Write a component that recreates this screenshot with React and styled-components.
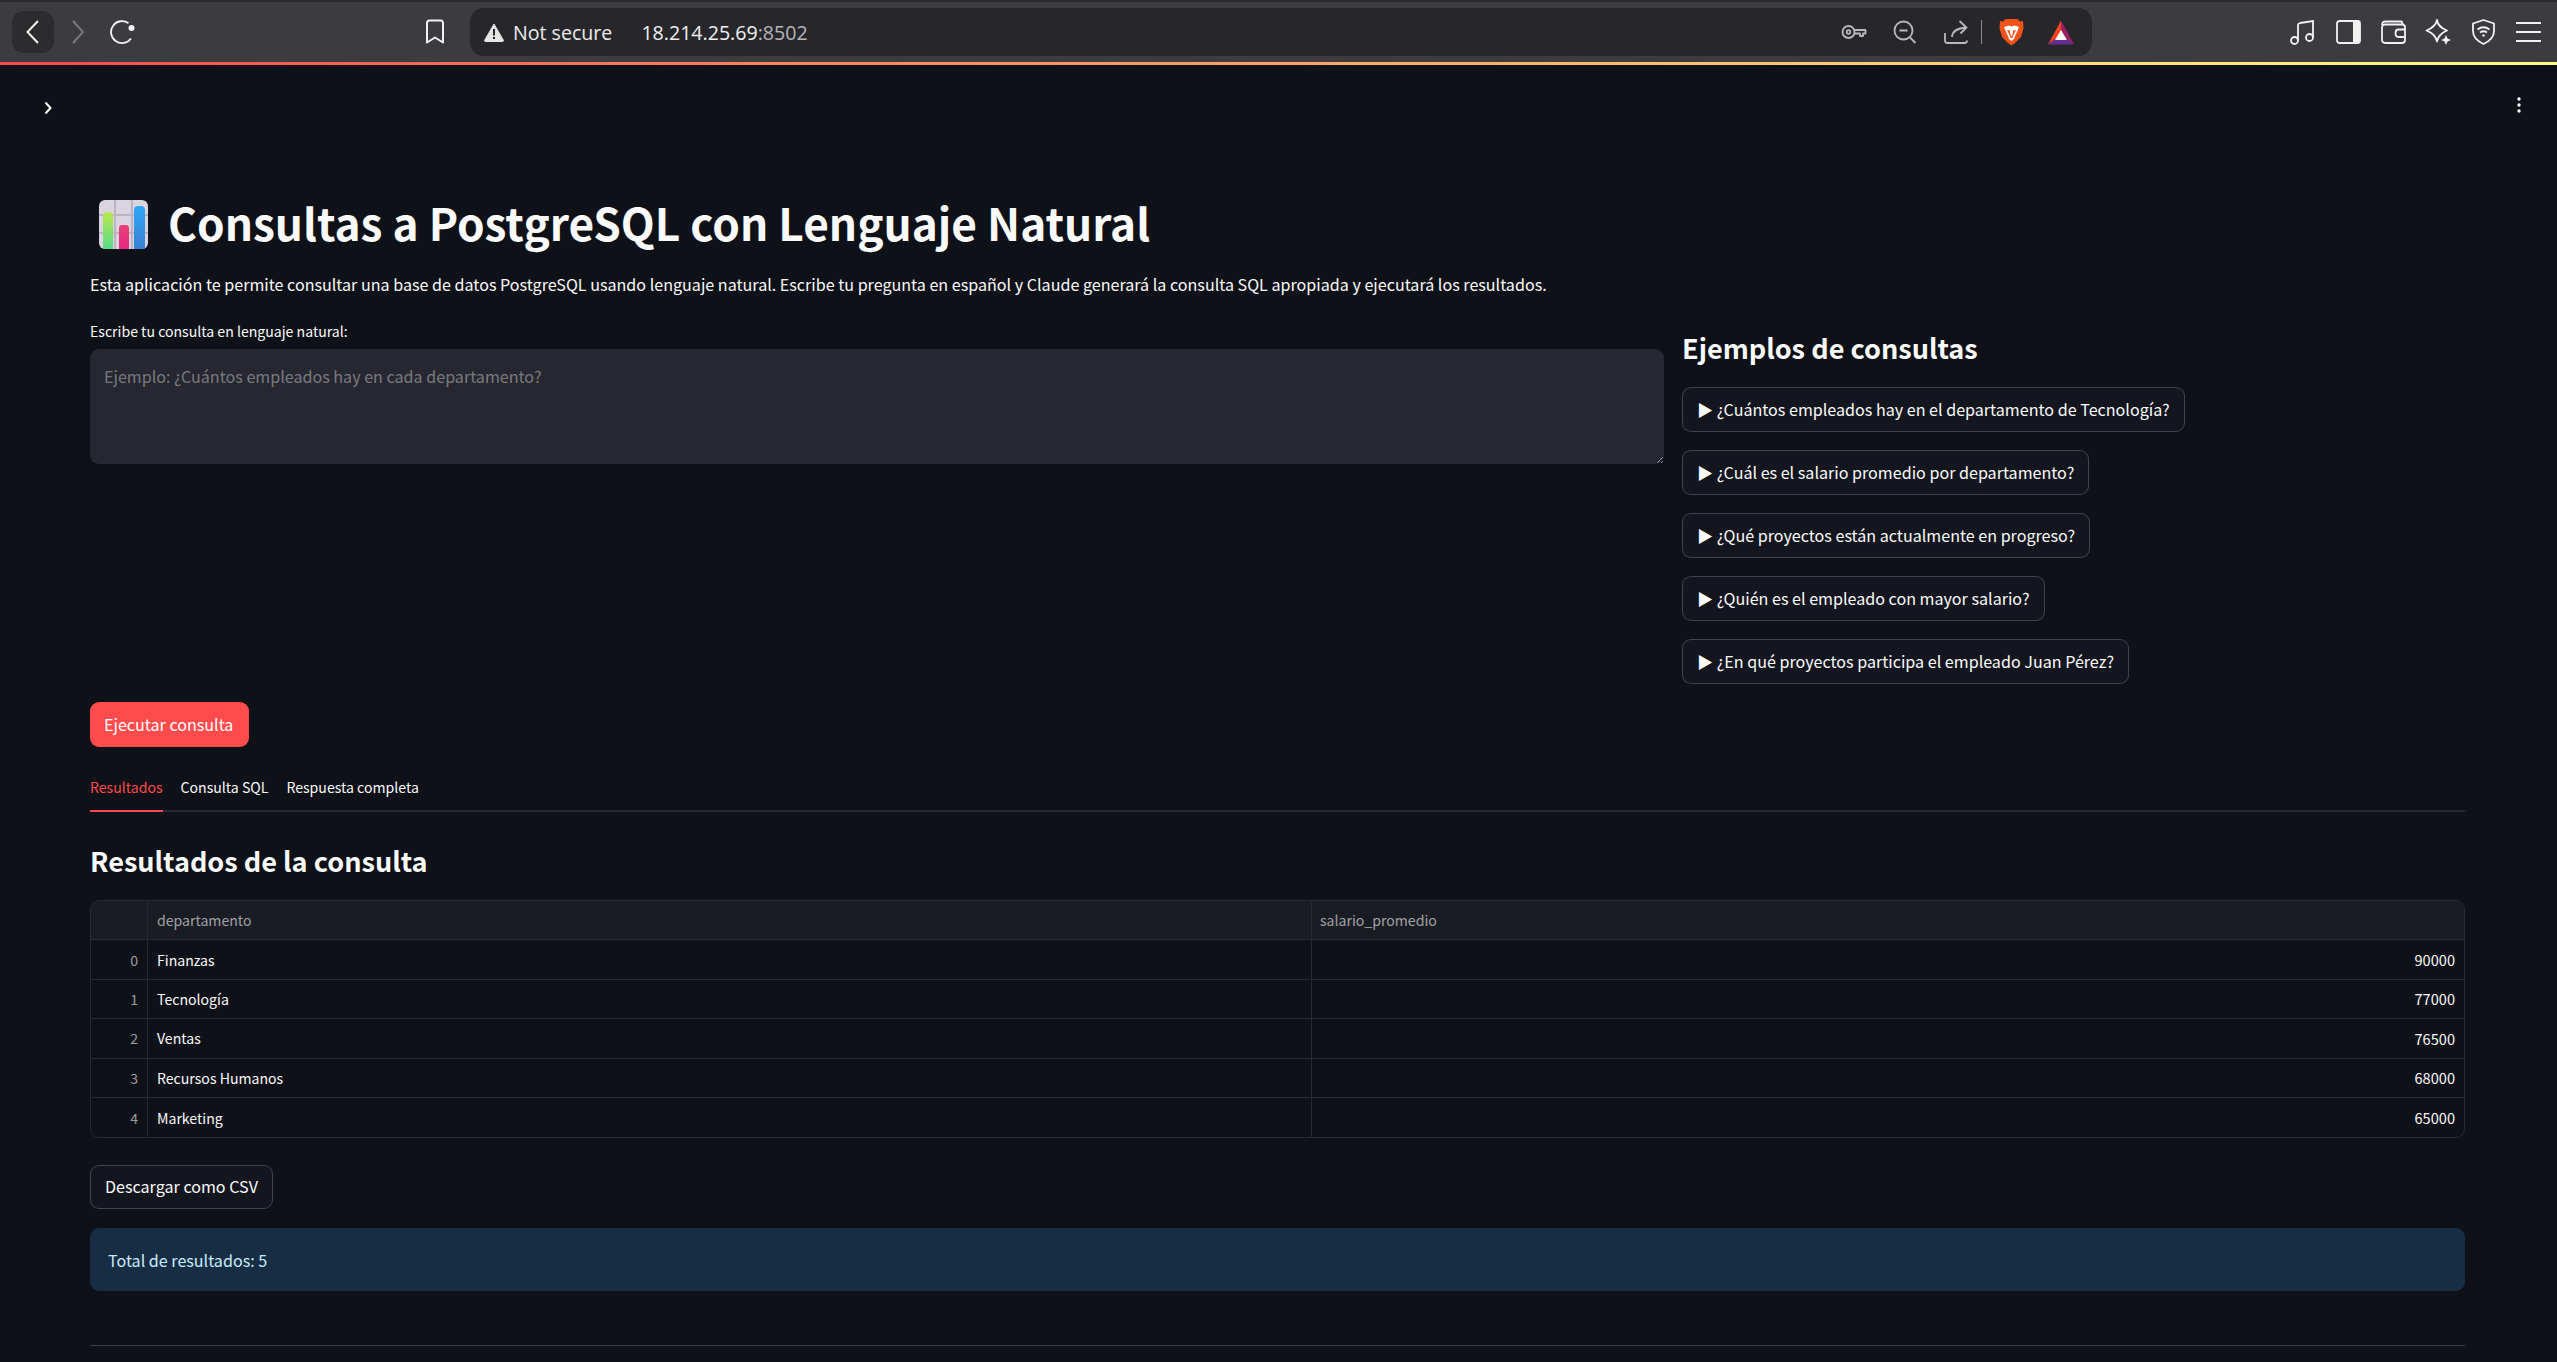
import React from 'react'
import styled, { createGlobalStyle } from 'styled-components'

const SANS = '"Noto Sans CJK SC", "Liberation Sans", sans-serif'

const rows = [
  { idx: 0, dep: 'Finanzas', sal: 90000 },
  { idx: 1, dep: 'Tecnología', sal: 77000 },
  { idx: 2, dep: 'Ventas', sal: 76500 },
  { idx: 3, dep: 'Recursos Humanos', sal: 68000 },
  { idx: 4, dep: 'Marketing', sal: 65000 },
]

const examples = [
  '¿Cuántos empleados hay en el departamento de Tecnología?',
  '¿Cuál es el salario promedio por departamento?',
  '¿Qué proyectos están actualmente en progreso?',
  '¿Quién es el empleado con mayor salario?',
  '¿En qué proyectos participa el empleado Juan Pérez?',
]

const App = () => {
  return (
    <>
      <GlobalStyle />
      <Toolbar>
        <BackButton>
          <svg width="18" height="26" viewBox="0 0 18 26" fill="none" stroke="#f2f2f2" strokeWidth="2">
            <path d="M14 2 L3.5 13 L14 24" />
          </svg>
        </BackButton>
        <IconBox $w={24} $ml={12}>
          <svg width="16" height="26" viewBox="0 0 16 26" fill="none" stroke="#77777b" strokeWidth="2">
            <path d="M3 2 L13 13 L3 24" />
          </svg>
        </IconBox>
        <IconBox $w={26} $ml={20}>
          <svg width="26" height="26" viewBox="0 0 26 26" fill="none" stroke="#f2f2f2" strokeWidth="1.8">
            <path d="M21 19.5 A11 11 0 1 1 18.5 4.2" />
            <circle cx="21.5" cy="9" r="3" fill="#f2f2f2" stroke="none" />
          </svg>
        </IconBox>
        <IconBox $w={24} $ml={287}>
          <svg width="20" height="26" viewBox="0 0 20 26" fill="none" stroke="#f2f2f2" strokeWidth="2">
            <path d="M2 4 Q2 1.5 4.5 1.5 H15.5 Q18 1.5 18 4 V23.5 L10 18.5 L2 23.5 Z" strokeLinejoin="round" />
          </svg>
        </IconBox>
        <AddressBar>
          <svg width="20" height="19" viewBox="0 0 20 19">
            <path d="M10 1 L19.5 17.5 Q19.5 18.5 18.5 18.5 H1.5 Q0.5 18.5 0.5 17.5 Z" fill="#e6e6e6" stroke="#e6e6e6" strokeLinejoin="round" />
            <rect x="9" y="6" width="2" height="6.5" fill="#27272b" />
            <rect x="9" y="14" width="2" height="2" fill="#27272b" />
          </svg>
          <NotSecure>Not secure</NotSecure>
          <Url>18.214.25.69<UrlPort>:8502</UrlPort></Url>
          <AddressIcons>
            <IconBox $w={28}>
              <svg width="26" height="16" viewBox="0 0 26 16" fill="none" stroke="#b9b9bb" strokeWidth="1.8">
                <circle cx="7.5" cy="8" r="6" />
                <circle cx="7.5" cy="8" r="1.8" />
                <path d="M13.5 6 H24.5 V9.5 L22 9.5 V12 H19 V9.5 H13.5" strokeLinejoin="round" />
              </svg>
            </IconBox>
            <IconBox $w={28} $ml={23}>
              <svg width="24" height="24" viewBox="0 0 24 24" fill="none" stroke="#b9b9bb" strokeWidth="1.8">
                <circle cx="10.5" cy="10.5" r="9" />
                <path d="M6.5 10.5 H14.5 M17 17.5 L22.5 23" />
              </svg>
            </IconBox>
            <IconBox $w={28} $ml={23}>
              <svg width="24" height="24" viewBox="0 0 24 24" fill="none" stroke="#b9b9bb" strokeWidth="1.8">
                <path d="M1 13 V20.5 Q1 23 3.5 23 H20.5 Q23 23 23 20.5" />
                <path d="M8 17 Q8.5 8.5 22 7.5 M15.5 1 L22.5 7.5 L16.5 13.5" />
              </svg>
            </IconBox>
            <Separator />
            <IconBox $w={28} $ml={15}>
              <svg width="25" height="28" viewBox="0 0 25 28">
                <path d="M6.5 1 H18.5 L21 3.5 L24 3 L24.5 10 L22 19 L16 25 L12.5 27.5 L9 25 L3 19 L0.5 10 L1 3 L4 3.5 Z" fill="#f2521b" />
                <path d="M5 9 L9.5 7.5 L12.5 8.5 L15.5 7.5 L20 9 L18 14 L16 18 L15 21 L12.5 23 L10 21 L9 18 L7 14 Z" fill="#fff" />
                <path d="M8 12 L11 12.5 L11 15 L12.5 19 L14 15 L14 12.5 L17 12 L14.5 17 L13.5 20 H11.5 L10.5 17 Z" fill="#f2521b" />
              </svg>
            </IconBox>
            <IconBox $w={28} $ml={22}>
              <svg width="28" height="25" viewBox="0 0 28 25">
                <path d="M14 0.5 L1 24.5 L14 15 Z" fill="#f4441f" />
                <path d="M14 0.5 L27 24.5 L14 15 Z" fill="#9e1f63" />
                <path d="M1 24.5 H27 L21 19.5 H7 Z" fill="#662d91" />
                <path d="M14 10 L20 20 H8 Z" fill="#fff" />
              </svg>
            </IconBox>
          </AddressIcons>
        </AddressBar>
        <BrowserIcons>
          <IconBox $w={28}>
            <svg width="26" height="25" viewBox="0 0 26 25" fill="none" stroke="#f2f2f2" strokeWidth="1.8">
              <circle cx="4.5" cy="20.5" r="3.5" />
              <circle cx="19.5" cy="17.5" r="3.5" />
              <path d="M8 20.5 V5 Q8 3.5 10 3 L23 1 V17.5" />
            </svg>
          </IconBox>
          <IconBox $w={28}>
            <svg width="25" height="24" viewBox="0 0 25 24" fill="none">
              <rect x="1" y="1" width="23" height="22" rx="2.5" stroke="#f2f2f2" strokeWidth="1.8" />
              <rect x="17" y="1" width="7" height="22" fill="#f2f2f2" />
            </svg>
          </IconBox>
          <IconBox $w={28}>
            <svg width="25" height="24" viewBox="0 0 25 24" fill="none" stroke="#f2f2f2" strokeWidth="1.8">
              <path d="M1 5 Q1 1.5 4.5 1.5 H20 Q21.5 1.5 21.5 4.5" />
              <rect x="1" y="4.5" width="23" height="18.5" rx="3" />
              <path d="M24 9.5 H17.5 Q14.5 9.5 14.5 13 Q14.5 17 17.5 17 H24" />
            </svg>
          </IconBox>
          <IconBox $w={28}>
            <svg width="26" height="26" viewBox="0 0 26 26" fill="none" stroke="#f2f2f2" strokeWidth="1.8">
              <path d="M12 1 Q13 8 22 11.5 Q13.5 15 12 22.5 Q10.5 15 1.5 11.5 Q10.5 8 12 1 Z" strokeLinejoin="round" />
              <path d="M21 16 L22.5 19.5 L26 21 L22.5 22.5 L21 26 L19.5 22.5 L16 21 L19.5 19.5 Z" fill="#f2f2f2" stroke="none" />
            </svg>
          </IconBox>
          <IconBox $w={28}>
            <svg width="23" height="26" viewBox="0 0 23 26" fill="none" stroke="#f2f2f2" strokeWidth="1.8">
              <path d="M11.5 1 L22 4.5 V12 Q22 20 11.5 25 Q1 20 1 12 V4.5 Z" strokeLinejoin="round" />
              <path d="M5.5 10.5 Q11.5 6 17.5 10.5 M8 13.5 Q11.5 11 15 13.5" />
              <circle cx="11.5" cy="16.5" r="1.2" fill="#f2f2f2" stroke="none" />
            </svg>
          </IconBox>
          <IconBox $w={28}>
            <svg width="25" height="22" viewBox="0 0 25 22" fill="none" stroke="#f2f2f2" strokeWidth="2">
              <path d="M0 2 H25 M0 11 H25 M0 20 H25" />
            </svg>
          </IconBox>
        </BrowserIcons>
      </Toolbar>
      <Decoration />
      <AppHeader>
        <svg width="10" height="14" viewBox="0 0 10 14" fill="none" stroke="#fafafa" strokeWidth="2">
          <path d="M2.5 1.5 L7.5 7 L2.5 12.5" />
        </svg>
        <KebabIcon width="4" height="16" viewBox="0 0 4 16" fill="#fafafa">
          <circle cx="2" cy="2" r="1.7" />
          <circle cx="2" cy="8" r="1.7" />
          <circle cx="2" cy="14" r="1.7" />
        </KebabIcon>
      </AppHeader>
      <Content>
        <TitleRow>
          <svg width="49" height="49" viewBox="0 0 49 49">
            <defs>
              <linearGradient id="barGreen" x1="0" y1="0" x2="0" y2="1">
                <stop offset="0" stopColor="#b9e84f" />
                <stop offset="1" stopColor="#58d98a" />
              </linearGradient>
              <linearGradient id="barPink" x1="0" y1="0" x2="0" y2="1">
                <stop offset="0" stopColor="#e8407a" />
                <stop offset="1" stopColor="#e62a80" />
              </linearGradient>
              <linearGradient id="barBlue" x1="0" y1="0" x2="0" y2="1">
                <stop offset="0" stopColor="#30a8f5" />
                <stop offset="1" stopColor="#3a7fd4" />
              </linearGradient>
            </defs>
            <rect width="49" height="49" rx="6" fill="#d9d4e0" />
            <path d="M16 0 V49 M33 0 V49 M0 15 H49 M0 33 H49" stroke="#b9b4c0" strokeWidth="2" />
            <path d="M4 16 Q4 12 8 12 H10 Q14 12 14 16 V49 H4 Z" fill="url(#barGreen)" />
            <path d="M20 28 Q20 25 23 25 H27 Q30 25 30 28 V49 H20 Z" fill="url(#barPink)" />
            <path d="M35 10 Q35 6 39 6 H42 Q46 6 46 10 V49 H35 Z" fill="url(#barBlue)" />
          </svg>
          <Title>Consultas a PostgreSQL con Lenguaje Natural</Title>
        </TitleRow>
        <Intro>
          Esta aplicación te permite consultar una base de datos PostgreSQL usando lenguaje natural. Escribe tu pregunta en español y Claude generará la consulta SQL apropiada y ejecutará los resultados.
        </Intro>
        <Columns>
          <div>
            <FieldLabel>Escribe tu consulta en lenguaje natural:</FieldLabel>
            <QueryInput readOnly placeholder="Ejemplo: ¿Cuántos empleados hay en cada departamento?" />
          </div>
          <ExamplesColumn>
            <SideHeading>Ejemplos de consultas</SideHeading>
            <ExampleList>
              {examples.map((text) => (
                <Button key={text}>▶ {text}</Button>
              ))}
            </ExampleList>
          </ExamplesColumn>
        </Columns>
        <RunButton>Ejecutar consulta</RunButton>
        <TabList>
          <Tab $active>Resultados</Tab>
          <Tab>Consulta SQL</Tab>
          <Tab>Respuesta completa</Tab>
        </TabList>
        <SectionHeading>Resultados de la consulta</SectionHeading>
        <DataTable>
          <HeaderCell />
          <HeaderCell>departamento</HeaderCell>
          <HeaderCell $last>salario_promedio</HeaderCell>
          {rows.map((row, i) => (
            <React.Fragment key={row.idx}>
              <IndexCell $bottom={i === rows.length - 1}>{row.idx}</IndexCell>
              <Cell $bottom={i === rows.length - 1}>{row.dep}</Cell>
              <Cell $bottom={i === rows.length - 1} $number $last>{row.sal}</Cell>
            </React.Fragment>
          ))}
        </DataTable>
        <DownloadButton>Descargar como CSV</DownloadButton>
        <InfoBox>Total de resultados: 5</InfoBox>
        <Rule />
      </Content>
    </>
  )
}

export default App

const GlobalStyle = createGlobalStyle`
  html, body {
    margin: 0;
    height: 1362px;
    overflow: hidden;
    background: #0e1117;
  }
  body {
    font-family: ${SANS};
    color: #fafafa;
  }
  * {
    box-sizing: border-box;
  }
`

const Toolbar = styled.div`
  height: 62px;
  display: flex;
  align-items: center;
  padding: 0 15px 0 12px;
  background: #3b3b40;
  border-top: 2px solid #2a2a2e;
`

const BackButton = styled.div`
  width: 42px;
  height: 42px;
  border-radius: 12px;
  background: #2c2c2f;
  display: flex;
  align-items: center;
  justify-content: center;
`

const IconBox = styled.div`
  width: ${(p) => p.$w}px;
  margin-left: ${(p) => p.$ml || 0}px;
  flex: none;
  display: flex;
  align-items: center;
  justify-content: center;
`

const AddressBar = styled.div`
  width: 1622px;
  height: 48px;
  margin-left: 23px;
  padding: 0 17px 0 14px;
  border-radius: 14px;
  background: #27272b;
  display: flex;
  align-items: center;
  font-family: "Open Sans", sans-serif;
`

const NotSecure = styled.span`
  margin-left: 9px;
  font-size: 19.6px;
  color: #ececec;
`

const Url = styled.span`
  margin-left: 29px;
  font-size: 19.6px;
  color: #f2f2f2;
`

const UrlPort = styled.span`
  color: #b5b5b8;
`

const AddressIcons = styled.div`
  margin-left: auto;
  display: flex;
  align-items: center;
`

const Separator = styled.div`
  width: 1px;
  height: 24px;
  margin-left: 11px;
  background: #8a8a8e;
`

const BrowserIcons = styled.div`
  margin-left: auto;
  display: flex;
  align-items: center;
  gap: 17px;
`

const Decoration = styled.div`
  height: 3px;
  background: linear-gradient(90deg, #ff4b4b, #fffd80);
`

const AppHeader = styled.div`
  height: 124px;
  padding: 36px 36px 0 43px;
  display: flex;
  align-items: flex-start;
  justify-content: space-between;
`

const KebabIcon = styled.svg`
  margin-top: -4px;
`

const Content = styled.main`
  padding: 0 92px 0 90px;
`

const TitleRow = styled.div`
  height: 70px;
  padding-left: 9px;
  display: flex;
  align-items: center;
  gap: 20px;
`

const Title = styled.h1`
  margin: -4px 0 0;
  font-size: 44.2px;
  line-height: 70px;
  font-weight: 700;
  white-space: nowrap;
`

const Intro = styled.p`
  margin: 11px 0 0;
  font-size: 16.1px;
  line-height: 28px;
`

const Columns = styled.div`
  margin-top: 23px;
  display: grid;
  grid-template-columns: 1574px 1fr;
  gap: 18px;
`

const FieldLabel = styled.label`
  display: block;
  height: 20px;
  margin-bottom: 8px;
  font-size: 14.1px;
  line-height: 20px;
`

const QueryInput = styled.textarea`
  display: block;
  width: 100%;
  height: 115px;
  padding: 13px 14px;
  border: none;
  outline: none;
  border-radius: 9px;
  background: #262730;
  color: #fafafa;
  resize: vertical;
  font-family: ${SANS};
  font-size: 16.1px;
  line-height: 28px;
  &::placeholder {
    color: rgba(250, 250, 250, 0.4);
  }
`

const ExamplesColumn = styled.div`
  padding-top: 7px;
`

const SideHeading = styled.h3`
  margin: 0;
  font-size: 27.1px;
  line-height: 40px;
  font-weight: 600;
`

const ExampleList = styled.div`
  margin-top: 19px;
  display: flex;
  flex-direction: column;
  align-items: flex-start;
  gap: 18px;
`

const Button = styled.button`
  height: 45px;
  padding: 0 14px 2px;
  border: 1px solid rgba(250, 250, 250, 0.2);
  border-radius: 9px;
  background: #13161e;
  color: #fafafa;
  font-family: ${SANS};
  font-size: 16.1px;
  line-height: 28px;
  white-space: nowrap;
`

const RunButton = styled(Button)`
  display: block;
  margin-top: 18px;
  padding-right: 16px;
  border: none;
  background: #ff4b4b;
  color: #fff;
`

const TabList = styled.div`
  height: 43px;
  margin-top: 22px;
  display: flex;
  gap: 18px;
  border-bottom: 2px solid #262730;
`

const Tab = styled.div`
  height: 43px;
  font-size: 14.1px;
  line-height: 37px;
  color: ${(p) => (p.$active ? '#ff4b4b' : '#fafafa')};
  border-bottom: 2px solid ${(p) => (p.$active ? '#ff4b4b' : 'transparent')};
`

const SectionHeading = styled(SideHeading)`
  margin-top: 29px;
`

const DataTable = styled.div`
  margin-top: 19px;
  display: grid;
  grid-template-columns: 57px 1164px 1fr;
  grid-auto-rows: 39.4px;
  border: 1px solid #262a31;
  border-radius: 9px;
  overflow: hidden;
  font-size: 14.1px;
`

const Cell = styled.div`
  display: flex;
  align-items: center;
  justify-content: ${(p) => (p.$number ? 'flex-end' : 'flex-start')};
  padding: 0 9px;
  color: #fafafa;
  font-size: ${(p) => (p.$number ? '14.6px' : 'inherit')};
  border-right: ${(p) => (p.$last ? 'none' : '1px solid #262a31')};
  border-bottom: ${(p) => (p.$bottom ? 'none' : '1px solid #262a31')};
`

const HeaderCell = styled(Cell)`
  background: #1a1c24;
  color: rgba(250, 250, 250, 0.6);
  padding-left: ${(p) => (p.$last ? '8px' : '9px')};
`

const IndexCell = styled(Cell)`
  justify-content: flex-end;
  color: rgba(250, 250, 250, 0.6);
`

const DownloadButton = styled(Button)`
  display: block;
  margin-top: 27px;
  height: 44px;
`

const InfoBox = styled.div`
  margin-top: 19px;
  height: 63px;
  padding: 0 18px;
  display: flex;
  align-items: center;
  border-radius: 9px;
  background: #172d43;
  color: #c7ebff;
  font-size: 16.1px;
`

const Rule = styled.hr`
  margin: 54px 0 0;
  border: none;
  border-top: 1px solid rgba(250, 250, 250, 0.2);
`
